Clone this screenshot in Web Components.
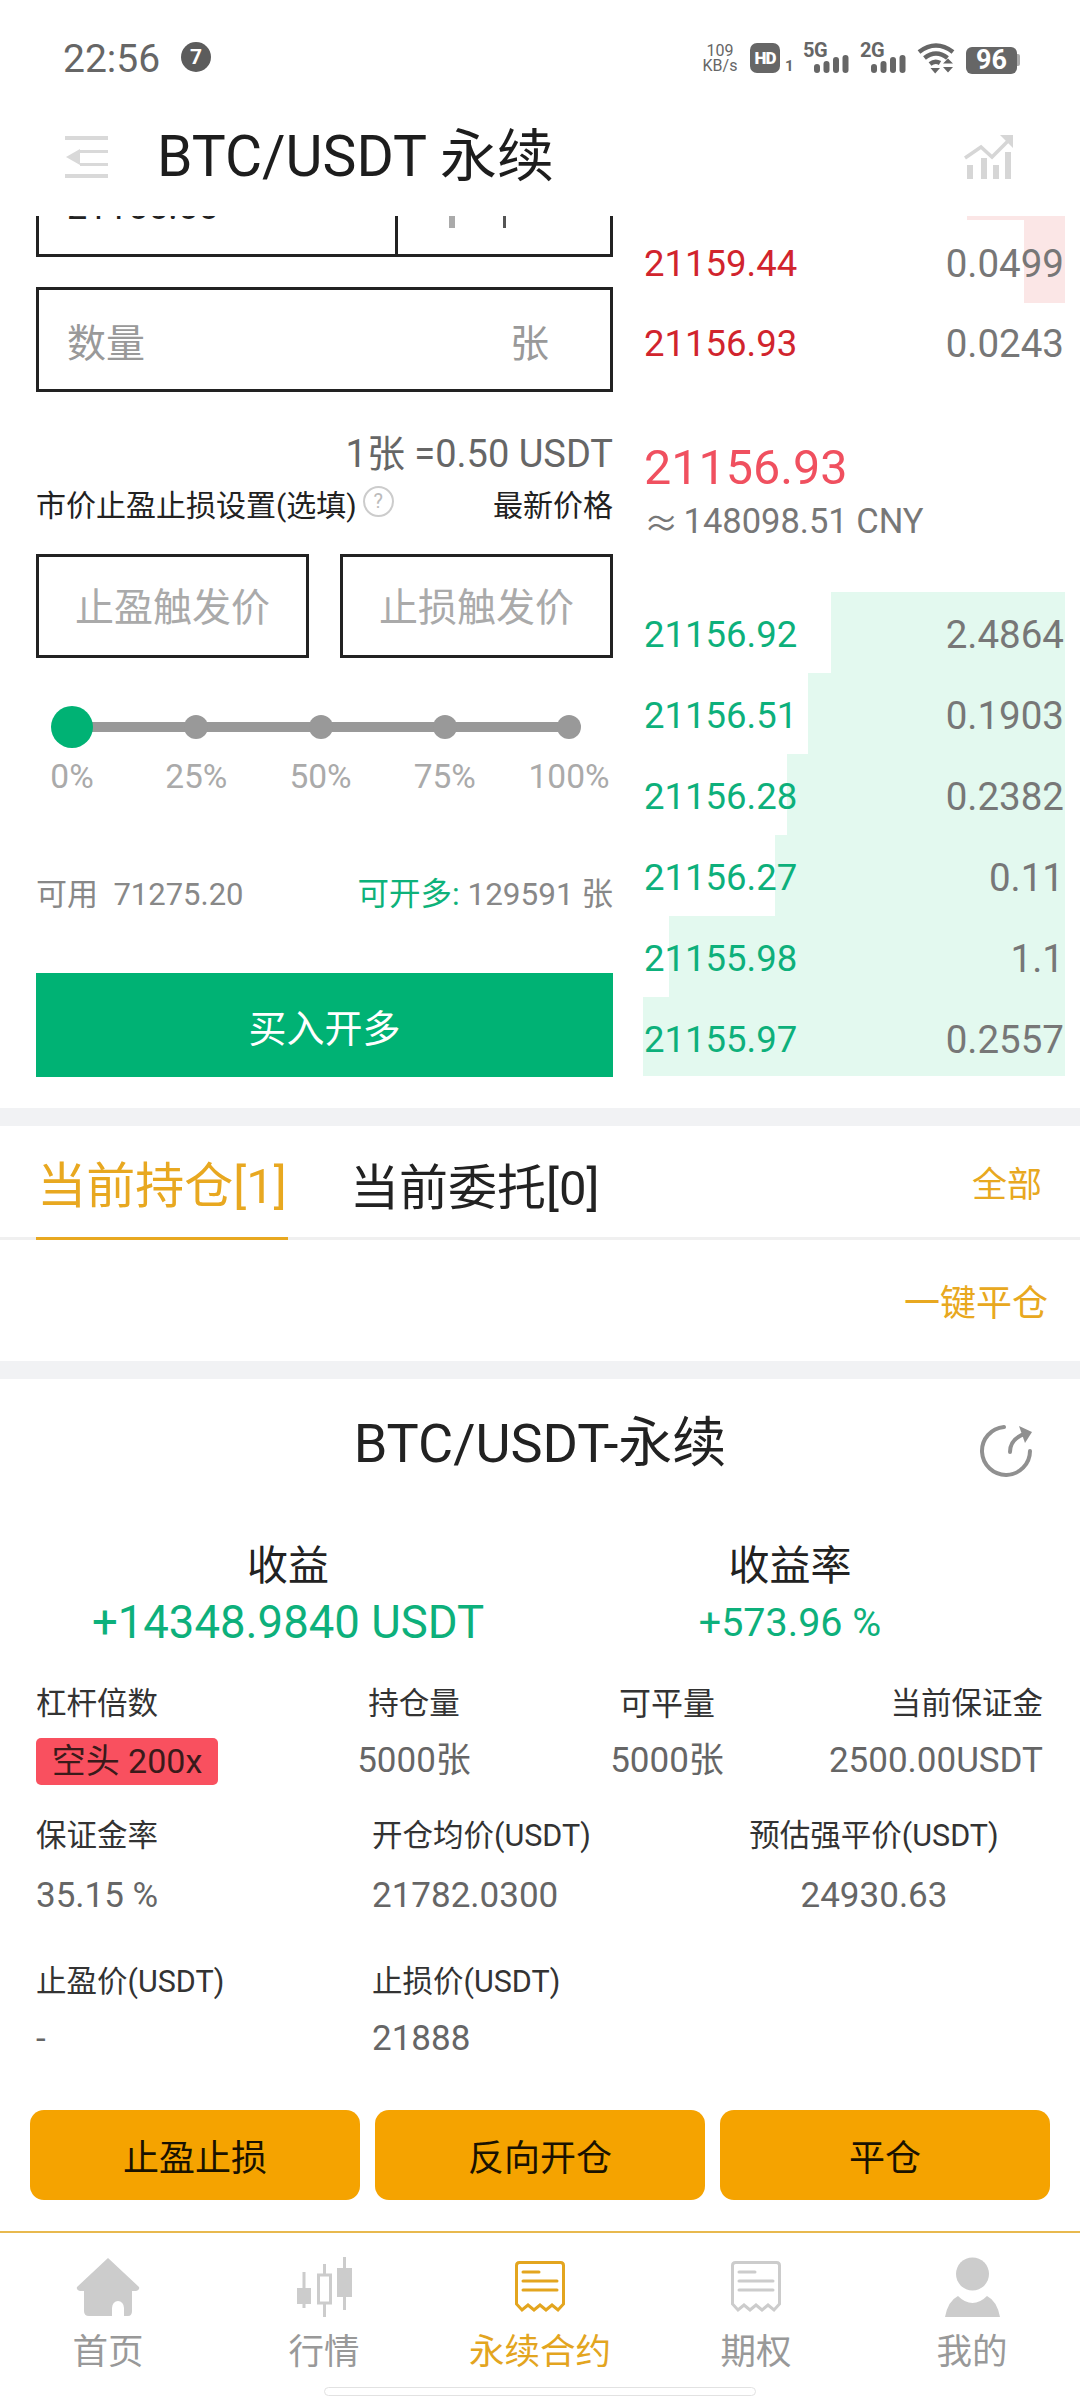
<!DOCTYPE html>
<html lang="zh">
<head>
<meta charset="utf-8">
<title>BTC/USDT 永续</title>
<style>
  html, body { margin: 0; padding: 0; background: #fff; }
  body {
    width: 1080px;
    height: 2400px;
    overflow: hidden;
    display: flex;
    flex-direction: column;
    font-family: Roboto, "Noto Sans CJK SC", sans-serif;
    color: #222;
  }
</style>
</head>
<body>
  <status-bar></status-bar>
  <app-header></app-header>
  <trade-panel>
    <order-form slot="form"></order-form>
    <order-book slot="book"></order-book>
  </trade-panel>
  <section-gap></section-gap>
  <position-tabs></position-tabs>
  <section-gap></section-gap>
  <position-card></position-card>
  <bottom-nav></bottom-nav>

<script>
const templateStatus = document.createElement("template");
templateStatus.innerHTML = `
  <style>
    :host { display: flex; align-items: center; height: 116px; padding: 0 60px 0 63px; color: #666; flex: none; }
    .time { font-size: 39px; line-height: 40px; margin-top: 2px; }
    .badge { width: 30px; height: 30px; margin: -2px 0 0 21px; border-radius: 50%; background: #5c5c5c; color: #fff; font-size: 21px; font-weight: 700; display: flex; align-items: center; justify-content: center; }
    .right { margin-left: auto; display: flex; align-items: center; height: 32px; }
    .speed { width: 36px; display: flex; flex-direction: column; align-items: center; font-size: 16px; line-height: 15px; }
    .hd { margin-left: 12px; width: 30px; height: 30px; border-radius: 7px; background: #666; color: #fff; font-size: 17px; font-weight: 900; display: flex; align-items: center; justify-content: center; letter-spacing: -1px; }
    .sim { font-size: 15px; font-weight: 700; align-self: flex-end; margin: 0 0 -1px 5px; width: 8px; }
    .net { position: relative; width: 46px; height: 32px; margin-left: 10px; }
    .net + .net { margin-left: 11px; }
    .net b { display: block; font-size: 20px; line-height: 17px; font-weight: 700; letter-spacing: -.5px; }
    .net svg { position: absolute; right: 0; bottom: 1px; }
    .wifi { margin-left: 11px; }
    .batt { margin-left: 11px; width: 51px; height: 27px; margin-top: 4px; border-radius: 6px; background: #666; color: #fff; font-size: 27px; font-weight: 700; display: flex; align-items: center; justify-content: center; }
    .nub { width: 3px; height: 12px; margin-top: 4px; background: #aaa; border-radius: 0 2px 2px 0; }
  </style>
  <span class="time">22:56</span>
  <span class="badge">7</span>
  <div class="right">
    <div class="speed"><span>109</span><span>KB/s</span></div>
    <div class="hd">HD</div>
    <span class="sim">1</span>
    <div class="net"><b>5G</b>
      <svg width="35" height="18" viewBox="0 0 35 18" fill="#666"><rect x="0" y="9" width="6" height="9" rx="3"/><rect x="9.5" y="6" width="6" height="12" rx="3"/><rect x="19" y="2" width="6" height="16" rx="3"/><rect x="28.5" y="0" width="6" height="18" rx="3"/></svg>
    </div>
    <div class="net"><b>2G</b>
      <svg width="35" height="18" viewBox="0 0 35 18" fill="#666"><rect x="0" y="9" width="6" height="9" rx="3"/><rect x="9.5" y="6" width="6" height="12" rx="3"/><rect x="19" y="2" width="6" height="16" rx="3"/><rect x="28.5" y="0" width="6" height="18" rx="3"/></svg>
    </div>
    <svg class="wifi" width="38" height="31" viewBox="0 0 38 31" fill="none" stroke="#666" stroke-width="4.5">
      <path d="M2 9 Q19 -4 36 9"/>
      <path d="M7.5 15 Q19 6 30.500 15"/>
      <path d="M13 21 Q18 17 23 20"/>
      <path d="M13.500 25 H23 L18.200 30.500 Z" fill="#666" stroke="none"/>
      <path d="M26 20.500 L31 15.500 L36 20.500 Z M26 24 H36 L31 29.500 Z" fill="#666" stroke="none"/>
    </svg>
    <div class="batt">96</div>
    <div class="nub"></div>
  </div>
`;
class StatusBar extends HTMLElement {
  constructor() {
    super();
    this.attachShadow({ mode: "open" });
    this.shadowRoot.appendChild(templateStatus.content.cloneNode(true));
  }
}

const templateHeader = document.createElement("template");
templateHeader.innerHTML = `
  <style>
    :host { display: flex; align-items: center; box-sizing: border-box; height: 100px; padding: 0 64px 18px 65px; background: #fff; flex: none; }
    .menu { flex: none; }
    h1 { margin: 0 0 0 49px; font-size: 57px; line-height: 70px; font-weight: 400; color: #1d1d1d; }
    .chart { margin-left: auto; }
  </style>
  <svg class="menu" width="43" height="42" viewBox="0 0 43 42" fill="#d9d9d9">
    <rect width="43" height="4"/><rect x="15" y="14" width="28" height="3"/><rect x="15" y="27" width="28" height="3"/><rect y="38" width="43" height="4"/>
    <path d="M1 21 L15 13 V29 Z"/>
  </svg>
  <h1>BTC/USDT 永续</h1>
  <svg class="chart" width="52" height="48" viewBox="0 0 52 48" fill="#d6d6d6">
    <rect x="3" y="32" width="6" height="14"/><rect x="17" y="25" width="6" height="21"/><rect x="29" y="32" width="6" height="14"/><rect x="41" y="19" width="6" height="27"/>
    <path d="M1 25 L17 14 L28 24 L46 6" fill="none" stroke="#d6d6d6" stroke-width="3.500"/>
    <path d="M36 2 H49 V15 Z"/>
  </svg>
`;
class AppHeader extends HTMLElement {
  constructor() {
    super();
    this.attachShadow({ mode: "open" });
    this.shadowRoot.appendChild(templateHeader.content.cloneNode(true));
  }
}

const templatePanel = document.createElement("template");
templatePanel.innerHTML = `
  <style>
    :host { display: grid; grid-template-columns: 577px 422px; column-gap: 30px; padding-left: 36px; height: 892px; overflow: hidden; flex: none; }
  </style>
  <slot name="form"></slot>
  <slot name="book"></slot>
`;
class TradePanel extends HTMLElement {
  constructor() {
    super();
    this.attachShadow({ mode: "open" });
    this.shadowRoot.appendChild(templatePanel.content.cloneNode(true));
  }
}

const templateForm = document.createElement("template");
templateForm.innerHTML = `
  <style>
    :host { display: block; }
    .clipped { display: flex; height: 41px; box-sizing: border-box; border: 3px solid #222; border-top: 0; overflow: hidden; }
    .price { width: 359px; border-right: 3px solid #222; box-sizing: border-box; padding-left: 28px; overflow: hidden; }
    .price span { display: block; font-size: 36px; line-height: 36px; margin-top: -27px; color: #222; }
    .ticks { display: flex; align-items: flex-start; padding-left: 51px; }
    .ticks i { display: block; width: 6px; height: 12px; background: #aaa; }
    .ticks i + i { width: 3px; height: 12px; margin-left: 48px; background: #555; }
    .qty { margin-top: 30px; height: 105px; box-sizing: border-box; border: 3px solid #222; display: flex; align-items: center; justify-content: space-between; padding: 0 61px 0 28px; font-size: 39px; color: #999; }
    .unit { margin-top: 42px; font-size: 38px; line-height: 40px; text-align: right; color: #666; }
    .tp { margin-top: 9px; display: flex; align-items: center; height: 40px; font-size: 30px; color: #222; }
    .help { margin: -4px 0 0 6px; width: 31px; height: 31px; box-sizing: border-box; border: 2px solid #ccc; border-radius: 50%; color: #bbb; font-size: 20px; display: flex; align-items: center; justify-content: center; }
    .last { margin-left: auto; }
    .triggers { margin-top: 31px; display: grid; grid-template-columns: 273px 273px; column-gap: 31px; }
    .trigger { height: 104px; box-sizing: border-box; border: 3px solid #222; padding-bottom: 4px; display: flex; align-items: center; justify-content: center; font-size: 39px; color: #aaa; }
    pct-slider { margin-top: 48px; }
    .balance { margin-top: 76px; margin-bottom: 1px; display: flex; align-items: center; justify-content: space-between; height: 40px; font-size: 31.500px; color: #888; }
    .balance .avail { font-size: 31px; }
    .balance em { font-style: normal; color: #0db27a; }
    .buy { margin-top: 62px; height: 104px; background: #00b274; color: #fff; font-size: 38px; display: flex; align-items: center; justify-content: center; }
  </style>
  <div class="clipped">
    <div class="price"><span>21155.55</span></div>
    <div class="ticks"><i></i><i></i></div>
  </div>
  <div class="qty"><span>数量</span><span>张</span></div>
  <div class="unit">1张 =0.50 USDT</div>
  <div class="tp"><span>市价止盈止损设置(选填)</span><span class="help">?</span><span class="last">最新价格</span></div>
  <div class="triggers"><div class="trigger">止盈触发价</div><div class="trigger">止损触发价</div></div>
  <pct-slider></pct-slider>
  <div class="balance"><span class="avail">可用&nbsp; 71275.20</span><span><em>可开多:</em> 129591 张</span></div>
  <div class="buy">买入开多</div>
`;
class OrderForm extends HTMLElement {
  constructor() {
    super();
    this.attachShadow({ mode: "open" });
    this.shadowRoot.appendChild(templateForm.content.cloneNode(true));
  }
}

const templateSlider = document.createElement("template");
templateSlider.innerHTML = `
  <style>
    /* the track runs between the first and the last stop centre */
    :host { display: flex; justify-content: space-between; width: 497px; margin-left: 36px; background: linear-gradient(#999, #999) 0 16px / 100% 10px no-repeat; }
    .stop { width: 0; display: flex; flex-direction: column; align-items: center; }
    .dot-box { height: 42px; display: flex; align-items: center; }
    .dot { flex: none; width: 24px; height: 24px; border-radius: 50%; background: #999; }
    .on .dot { width: 42px; height: 42px; background: #00b274; }
    .label { margin-top: 11px; font-size: 33.500px; line-height: 36px; color: #aaa; white-space: nowrap; }
  </style>
`;
class PctSlider extends HTMLElement {
  constructor() {
    super();
    this.attachShadow({ mode: "open" });
    this.shadowRoot.appendChild(templateSlider.content.cloneNode(true));
    ["0%", "25%", "50%", "75%", "100%"].forEach((pct, i) => {
      const stop = document.createElement("div");
      stop.className = i === 0 ? "stop on" : "stop";
      stop.innerHTML = `<div class="dot-box"><div class="dot"></div></div><div class="label">${pct}</div>`;
      this.shadowRoot.appendChild(stop);
    });
  }
}

const templateRow = document.createElement("template");
templateRow.innerHTML = `
  <style>
    :host { display: flex; align-items: center; justify-content: space-between; box-sizing: border-box; height: 81px; padding: 0 1px; font-size: 36.500px; color: #777; background: linear-gradient(var(--bar), var(--bar)) right / var(--depth, 0) 100% no-repeat; --bar: #e3f9ef; }
    :host([side="ask"]) { --bar: #fbe6e6; }
    .price { color: #0db07b; }
    .qty { font-size: 38.500px; }
    :host([side="ask"]) .price { color: #d1242d; }
  </style>
  <span class="price"></span><span class="qty"></span>
`;
class BookRow extends HTMLElement {
  constructor() {
    super();
    this.attachShadow({ mode: "open" });
    this.shadowRoot.appendChild(templateRow.content.cloneNode(true));
  }
  connectedCallback() {
    this.shadowRoot.querySelector(".price").textContent = this.getAttribute("price");
    this.shadowRoot.querySelector(".qty").textContent = this.getAttribute("qty");
    this.style.setProperty("--depth", this.getAttribute("depth") + "px");
  }
}

const templateBook = document.createElement("template");
templateBook.innerHTML = `
  <style>
    :host { display: block; }
    .sliver { height: 4px; margin-left: 324px; background: #fbe6e6; }
    book-row.first { height: 83px; padding-top: 3px; }
    .mid { margin-top: 56px; font-size: 48.500px; line-height: 56px; color: #f0505f; padding-left: 1px; }
    .cny { margin-top: 3px; font-size: 34.500px; line-height: 44px; color: #777; padding-left: 1px; display: flex; align-items: center; height: 44px; }
    .cny span { font-family: "Noto Sans CJK SC", sans-serif; margin-right: 5px; }
    .bids { margin-top: 49px; height: 484px; overflow: hidden; }
    .bids book-row { padding-top: 3px; }
  </style>
  <div class="sliver"></div>
  <book-row class="first" side="ask" price="21159.44" qty="0.0499" depth="41"></book-row>
  <book-row side="ask" price="21156.93" qty="0.0243" depth="0"></book-row>
  <div class="mid">21156.93</div>
  <div class="cny"><span>≈</span>148098.51 CNY</div>
  <div class="bids">
    <book-row side="bid" price="21156.92" qty="2.4864" depth="234"></book-row>
    <book-row side="bid" price="21156.51" qty="0.1903" depth="257"></book-row>
    <book-row side="bid" price="21156.28" qty="0.2382" depth="278"></book-row>
    <book-row side="bid" price="21156.27" qty="0.11" depth="290"></book-row>
    <book-row side="bid" price="21155.98" qty="1.1" depth="396"></book-row>
    <book-row side="bid" price="21155.97" qty="0.2557" depth="422"></book-row>
  </div>
`;
class OrderBook extends HTMLElement {
  constructor() {
    super();
    this.attachShadow({ mode: "open" });
    this.shadowRoot.appendChild(templateBook.content.cloneNode(true));
  }
}

class SectionGap extends HTMLElement {
  constructor() {
    super();
    this.attachShadow({ mode: "open" });
    this.shadowRoot.innerHTML = `<style>:host { display: block; height: 18px; background: #f1f2f4; flex: none; }</style>`;
  }
}

const templateTabs = document.createElement("template");
templateTabs.innerHTML = `
  <style>
    :host { display: block; flex: none; }
    .tabs { display: flex; align-items: stretch; height: 111px; padding: 0 38px 0 36px; border-bottom: 3px solid #f0f0f0; }
    .tab { display: flex; align-items: center; justify-content: center; font-size: 49px; margin-bottom: -3px; box-sizing: border-box; height: 114px; color: #222; white-space: nowrap; }
    .active { width: 252px; color: #e8a820; border-bottom: 3px solid #e8a820; }
    .second { margin-left: 62px; }
    .all { margin-left: auto; align-self: center; font-size: 35px; color: #e8a820; }
    .close-all { height: 121px; padding-bottom: 2px; box-sizing: border-box; display: flex; align-items: center; justify-content: flex-end; padding-right: 32px; font-size: 36px; color: #e8a820; }
  </style>
  <div class="tabs">
    <span class="tab active">当前持仓[1]</span>
    <span class="tab second">当前委托[0]</span>
    <span class="all">全部</span>
  </div>
  <div class="close-all">一键平仓</div>
`;
class PositionTabs extends HTMLElement {
  constructor() {
    super();
    this.attachShadow({ mode: "open" });
    this.shadowRoot.appendChild(templateTabs.content.cloneNode(true));
  }
}

const templateCell = document.createElement("template");
templateCell.innerHTML = `
  <style>
    :host { display: block; min-width: 0; }
    :host([align="center"]) { text-align: center; }
    :host([align="right"]) { text-align: right; }
    .label { font-size: var(--label-size, 30.500px); line-height: 36px; color: #333; white-space: nowrap; }
    .value { margin-top: var(--cell-gap, 16px); padding-top: 2px; font-size: 35px; line-height: 42px; color: #666; white-space: nowrap; }
    .tag { display: inline-block; box-sizing: border-box; width: 182px; height: 47px; border-radius: 5px; background: #f9505f; color: #3a1a1a; font-size: 34px; line-height: 47px; text-align: center; }
  </style>
  <div class="label"></div>
  <div class="value"></div>
`;
class InfoCell extends HTMLElement {
  constructor() {
    super();
    this.attachShadow({ mode: "open" });
    this.shadowRoot.appendChild(templateCell.content.cloneNode(true));
  }
  connectedCallback() {
    this.shadowRoot.querySelector(".label").textContent = this.getAttribute("label");
    const value = this.shadowRoot.querySelector(".value");
    if (this.hasAttribute("tag")) {
      value.innerHTML = `<span class="tag">${this.getAttribute("tag")}</span>`;
      value.style.padding = "0";
      value.style.height = "47px";
      value.style.lineHeight = "47px";
    } else {
      value.textContent = this.getAttribute("value");
    }
  }
}

class InfoRow extends HTMLElement {
  constructor() {
    super();
    this.attachShadow({ mode: "open" });
    this.shadowRoot.innerHTML = `<style>:host { display: grid; padding: 0 37px 0 36px; }</style><slot></slot>`;
  }
  connectedCallback() {
    this.style.gridTemplateColumns = this.getAttribute("columns");
  }
}

const templateCard = document.createElement("template");
templateCard.innerHTML = `
  <style>
    :host { display: block; flex: 1; background: #fff; }
    .title { height: 60px; margin-top: 20px; display: grid; grid-template-columns: 1fr auto 1fr; align-items: center; padding-right: 47px; font-size: 54px; color: #222; }
    .title span { grid-column: 2; margin-left: 47px; }
    .title svg { justify-self: end; margin-top: 24px; }
    .earn { margin-top: 82px; display: grid; grid-template-columns: 576px 428px; text-align: center; }
    .earn .name { font-size: 41px; line-height: 50px; color: #222; }
    .earn .num { margin-top: 10px; line-height: 44px; color: #0db07b; }
    .big { font-size: 45.500px; }
    .mid { font-size: 39.500px; }
    .r1 { margin-top: 41px; }
    .r2 { margin-top: 33px; --cell-gap: 19px; }
    .r3 { margin-top: 47px; }
    .actions { margin-top: 50px; padding: 0 30px; display: grid; grid-template-columns: repeat(3, 330px); column-gap: 15px; }
    .actions div { height: 90px; border-radius: 14px; background: #f5a300; color: #1a1200; font-size: 36px; display: flex; align-items: center; justify-content: center; }
  </style>
  <div class="title">
    <span>BTC/USDT-永续</span>
    <svg width="54" height="54" viewBox="38 20 54 54" fill="none" stroke="#909090" stroke-width="4" stroke-linecap="round">
      <path d="M63 23 A24 24 0 1 0 89 47"/>
      <path d="M69 48 Q69 34 86 29"/>
      <path d="M78 22 L91 28 L84 39 Z" fill="#909090" stroke="none"/>
    </svg>
  </div>
  <div class="earn">
    <div><div class="name">收益</div><div class="num big">+14348.9840 USDT</div></div>
    <div><div class="name">收益率</div><div class="num mid">+573.96 %</div></div>
  </div>
  <info-row class="r1" columns="264px 228px 278px 1fr">
    <info-cell label="杠杆倍数" tag="空头 200x"></info-cell>
    <info-cell label="持仓量" value="5000张" align="center"></info-cell>
    <info-cell label="可平量" value="5000张" align="center" style="--label-size: 32px"></info-cell>
    <info-cell label="当前保证金" value="2500.00USDT" align="right"></info-cell>
  </info-row>
  <info-row class="r2" columns="336px 328px 348px">
    <info-cell label="保证金率" value="35.15 %"></info-cell>
    <info-cell label="开仓均价(USDT)" value="21782.0300"></info-cell>
    <info-cell label="预估强平价(USDT)" value="24930.63" align="center"></info-cell>
  </info-row>
  <info-row class="r3" columns="336px 328px 348px">
    <info-cell label="止盈价(USDT)" value="-"></info-cell>
    <info-cell label="止损价(USDT)" value="21888"></info-cell>
  </info-row>
  <div class="actions"><div>止盈止损</div><div>反向开仓</div><div>平仓</div></div>
`;
class PositionCard extends HTMLElement {
  constructor() {
    super();
    this.attachShadow({ mode: "open" });
    this.shadowRoot.appendChild(templateCard.content.cloneNode(true));
  }
}

const billPath = "M4.500 1.500 H45.500 Q48.500 1.500 48.500 4.500 V43 L43 49 L37 44 L31 49 L25 44 L19 49 L13 44 L7 49 L1.500 43 V4.500 Q1.500 1.500 4.500 1.500 Z";
const navIcons = {
  home: `<svg width="64" height="58" viewBox="0 0 64 58" fill="#ccc"><path d="M32 0 L63 29 Q64 32 60 33 L56 33 V53 Q56 58 52 58 H48 V50 A6 7 0 0 0 36 50 V58 H13 Q8 58 8 53 V33 H4 Q0 32 1 29 Z"/></svg>`,
  market: `<svg width="57" height="62" viewBox="0 0 57 62" fill="#ccc"><rect x="1" y="32" width="14" height="16"/><rect x="6.500" y="16" width="3" height="36"/><rect x="22.500" y="19" width="12" height="28" fill="none" stroke="#ccc" stroke-width="3"/><rect x="27" y="8" width="3" height="11"/><rect x="27" y="47" width="3" height="14"/><rect x="41" y="12" width="15" height="29"/><rect x="47" y="1" width="3" height="53"/></svg>`,
  bill: (c) => `<svg width="50" height="52" viewBox="0 0 50 52" fill="none" stroke="${c}" stroke-width="3"><path d="${billPath}"/><path d="M8 11 H24 M8 20 H42 M8 29 H42" stroke-linecap="round"/></svg>`,
  me: `<svg width="55" height="60" viewBox="0 0 55 60" fill="#ccc"><circle cx="27.500" cy="17" r="16.500"/><path d="M0 60 Q3 44 13 39 Q20 46 27.500 46 Q35 46 42 39 Q52 44 55 60 Z"/></svg>`
};

const templateNav = document.createElement("template");
templateNav.innerHTML = `
  <style>
    :host { display: block; flex: none; height: 169px; border-top: 2px solid #e8b94f; box-sizing: border-box; background: #fff; }
    .items { display: grid; grid-template-columns: repeat(5, 216px); padding-top: 24px; }
    .item { display: flex; flex-direction: column; align-items: center; font-size: 35.500px; color: #999; }
    .item.on { color: #e3a51f; }
    .icon { height: 60px; display: flex; align-items: center; }
    .name { margin-top: 13px; line-height: 44px; }
    .pill { width: 432px; height: 9px; box-sizing: border-box; margin: 13px auto 0; border: 1px solid #e2e2e2; border-radius: 5px; background: #fff; }
  </style>
  <div class="items">
    <div class="item"><div class="icon">${navIcons.home}</div><div class="name">首页</div></div>
    <div class="item"><div class="icon">${navIcons.market}</div><div class="name">行情</div></div>
    <div class="item on"><div class="icon">${navIcons.bill("#e3a51f")}</div><div class="name">永续合约</div></div>
    <div class="item"><div class="icon">${navIcons.bill("#ccc")}</div><div class="name">期权</div></div>
    <div class="item"><div class="icon">${navIcons.me}</div><div class="name">我的</div></div>
  </div>
  <div class="pill"></div>
`;
class BottomNav extends HTMLElement {
  constructor() {
    super();
    this.attachShadow({ mode: "open" });
    this.shadowRoot.appendChild(templateNav.content.cloneNode(true));
  }
}

window.customElements.define("status-bar", StatusBar);
window.customElements.define("app-header", AppHeader);
window.customElements.define("trade-panel", TradePanel);
window.customElements.define("order-form", OrderForm);
window.customElements.define("pct-slider", PctSlider);
window.customElements.define("book-row", BookRow);
window.customElements.define("order-book", OrderBook);
window.customElements.define("section-gap", SectionGap);
window.customElements.define("position-tabs", PositionTabs);
window.customElements.define("info-cell", InfoCell);
window.customElements.define("info-row", InfoRow);
window.customElements.define("position-card", PositionCard);
window.customElements.define("bottom-nav", BottomNav);
</script>
</body>
</html>
